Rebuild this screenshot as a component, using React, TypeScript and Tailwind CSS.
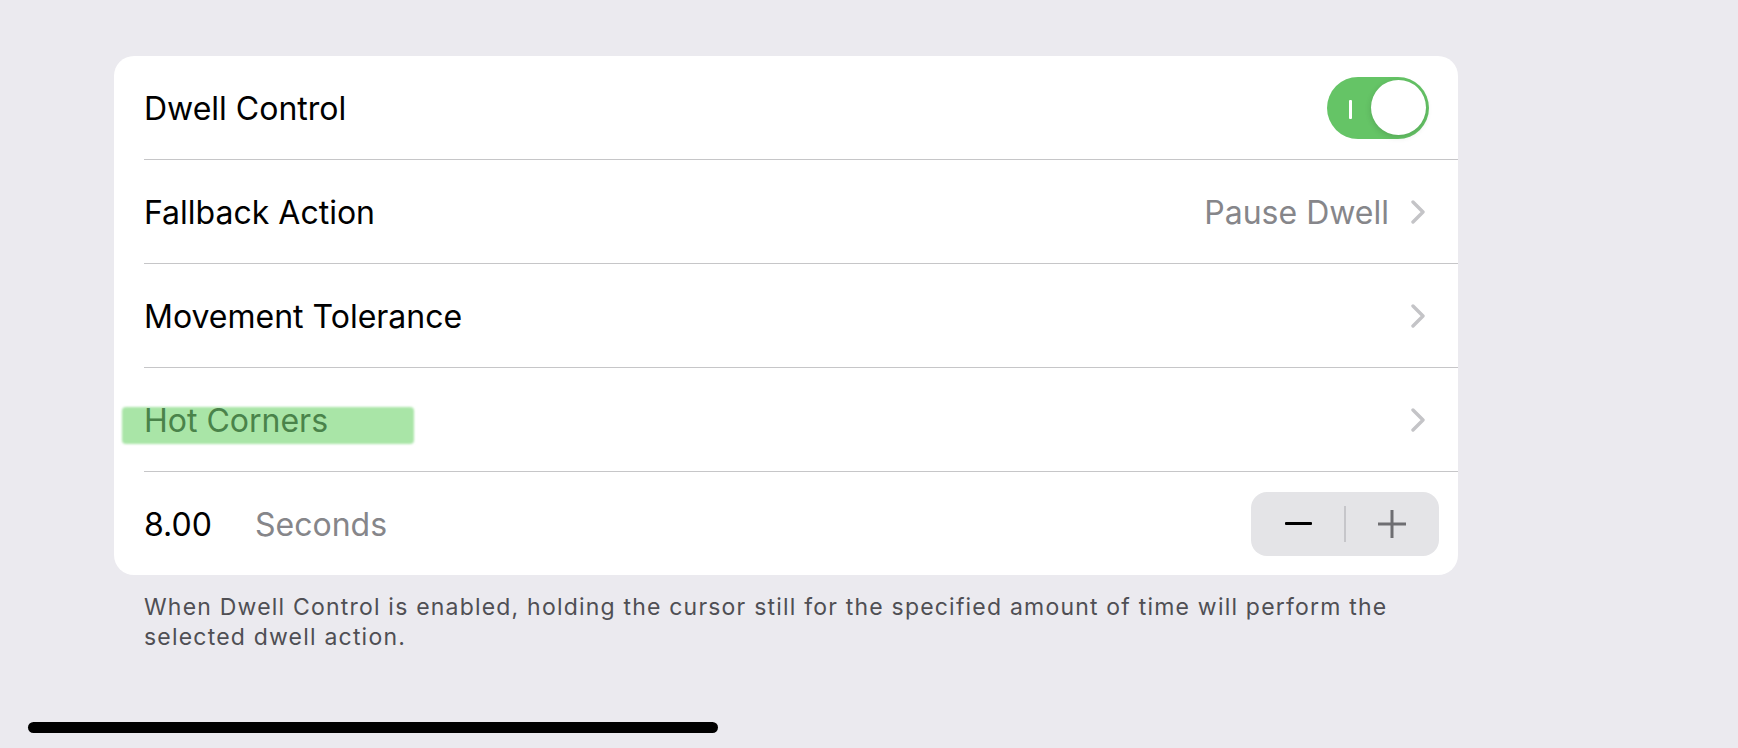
import React from "react";

const Chevron = () => (
  <svg width="14" height="24" viewBox="0 0 14 24" fill="none" className="shrink-0">
    <polyline points="2,2 12,12 2,22" stroke="#C4C4C7" strokeWidth="3.4" strokeLinecap="round" strokeLinejoin="round" />
  </svg>
);

const Divider = () => <div className="ml-[30px] h-px bg-[#C6C6C8]" />;

export default function App() {
  return (
    <div
      className="w-full h-[748px] bg-[#EBEAEF] flex flex-col overflow-hidden"
      style={{ fontFamily: "Inter, 'Noto Sans', sans-serif" }}
    >
      <div className="pl-[114px] pt-[56px]">
        <div className="w-[1344px] rounded-[20px] bg-white overflow-hidden">
          {/* Row 1 */}
          <div className="h-[103px] flex items-center pl-[30px] pr-[29px]">
            <span className="text-[32px] text-black flex-1 leading-none pt-[3px]">Dwell Control</span>
            <div className="relative w-[102px] h-[62px] rounded-full bg-[#65C466] flex items-center justify-end pr-[3px]">
              <div className="absolute left-[22px] top-[23px] w-[3px] h-[19px] bg-white rounded-[1px]" />
              <div className="w-[55px] h-[55px] rounded-full bg-white shadow-[0_2px_6px_rgba(0,0,0,0.15)]" />
            </div>
          </div>
          <Divider />
          {/* Row 2 */}
          <div className="h-[103px] flex items-center pl-[30px] pr-[33px]">
            <span className="text-[32px] text-black flex-1 leading-none pt-[3px]">Fallback Action</span>
            <span className="text-[32px] text-[#86868A] leading-none mr-[22px] pt-[3px]">Pause Dwell</span>
            <Chevron />
          </div>
          <Divider />
          {/* Row 3 */}
          <div className="h-[103px] flex items-center pl-[30px] pr-[33px]">
            <span className="text-[32px] text-black flex-1 leading-none pt-[3px]">Movement Tolerance</span>
            <Chevron />
          </div>
          <Divider />
          {/* Row 4 */}
          <div className="h-[103px] flex items-center pl-[30px] pr-[33px]">
            <div className="flex-1 flex pt-[3px]">
              <span className="relative text-[32px] text-[#4A834A] leading-none">
                <span className="absolute left-[-22px] top-[2px] w-[292px] h-[37px] bg-[#A9E5A7] rounded-[4px] blur-[1px]" />
                <span className="relative">Hot Corners</span>
              </span>
            </div>
            <Chevron />
          </div>
          <Divider />
          {/* Row 5 */}
          <div className="h-[103px] flex items-center pl-[30px] pr-[19px]">
            <span className="text-[32px] text-black leading-none w-[111px] pt-[3px]">8.00</span>
            <span className="text-[32px] text-[#86868A] leading-none flex-1 pt-[3px]">Seconds</span>
            <div className="w-[188px] h-[64px] rounded-[16px] bg-[#E4E4E7] flex items-center">
              <div className="flex-1 flex items-center justify-center">
                <div className="w-[27px] h-[3px] bg-black rounded-[1px] ml-[2px]" />
              </div>
              <div className="w-[2px] h-[36px] bg-[#C6C6CA]" />
              <div className="flex-1 flex items-center justify-center">
                <svg width="30" height="30" viewBox="0 0 30 30" className="mr-[2px]">
                  <line x1="15" y1="1" x2="15" y2="29" stroke="#6E6E72" strokeWidth="3" />
                  <line x1="1" y1="15" x2="29" y2="15" stroke="#6E6E72" strokeWidth="3" />
                </svg>
              </div>
            </div>
          </div>
        </div>
        <p className="w-[1344px] px-[30px] mt-[17px] text-[23px] leading-[30px] tracking-[1.2px] text-[#4F4F54]">
          When Dwell Control is enabled, holding the cursor still for the specified amount of time will perform the selected dwell action.
        </p>
      </div>
      <div className="mt-auto mb-[15px] ml-[28px] w-[690px] h-[11px] rounded-full bg-black" />
    </div>
  );
}
